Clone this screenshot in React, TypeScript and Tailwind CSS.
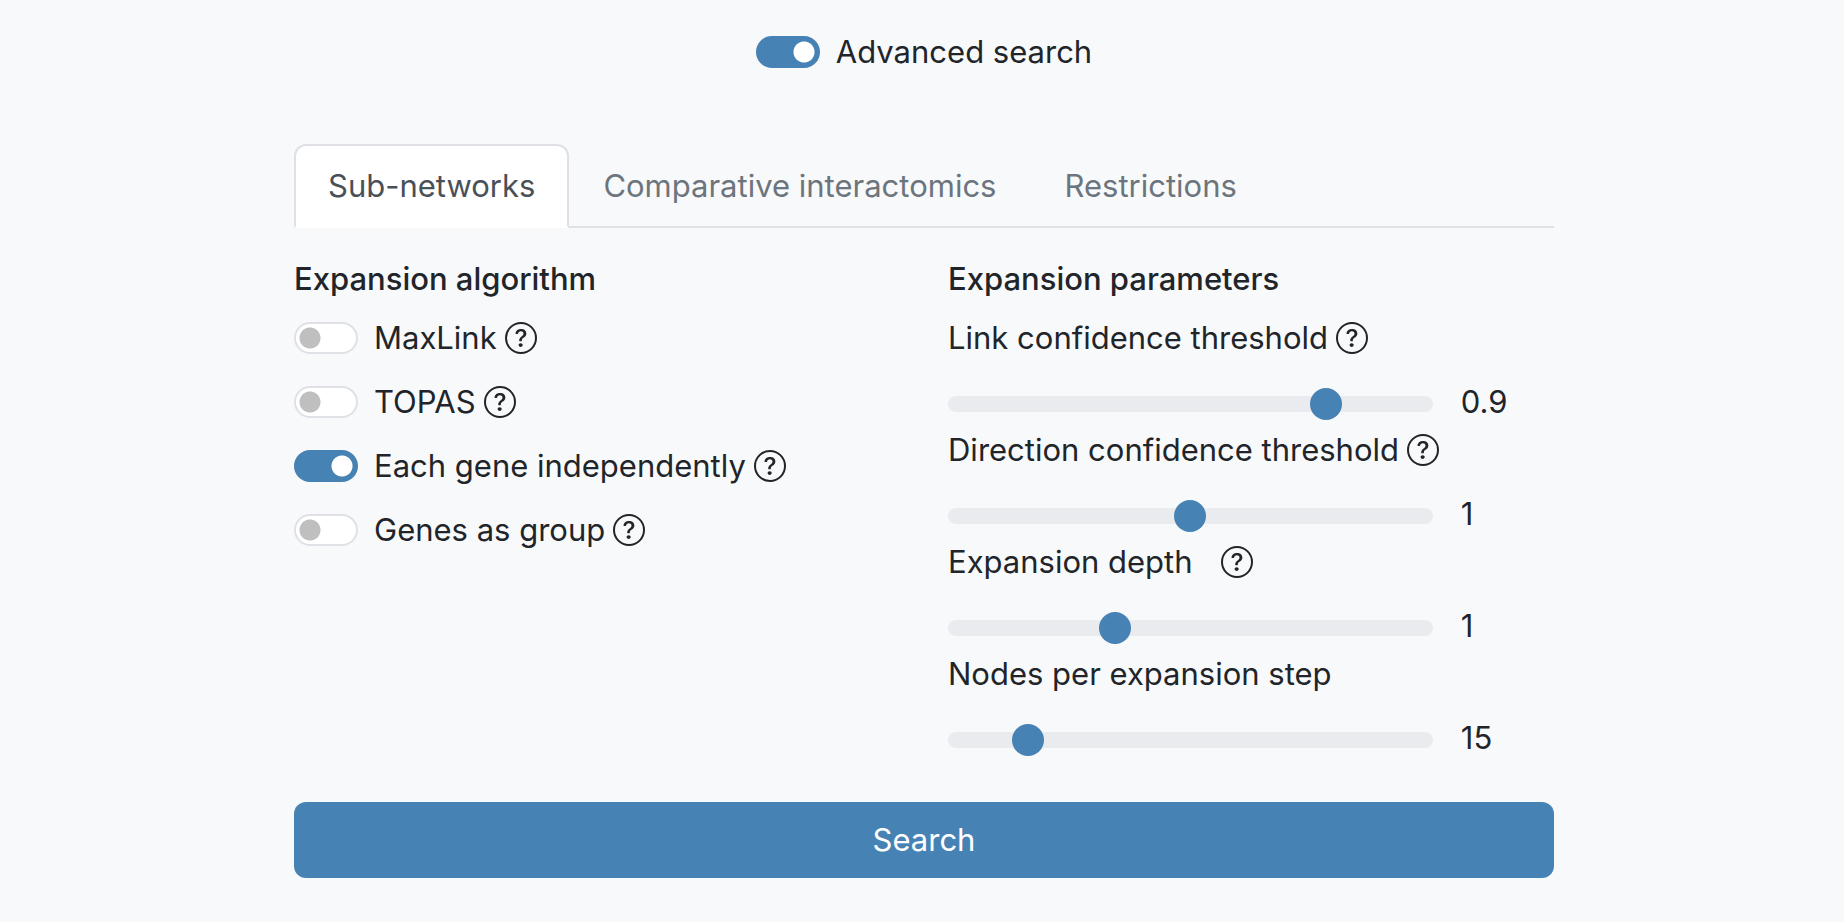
import { useState } from 'react'
import { BsQuestionCircle } from 'react-icons/bs'

const tabs = ['Sub-networks', 'Comparative interactomics', 'Restrictions']

const algorithms = [
  { id: 'maxlink', label: 'MaxLink' },
  { id: 'topas', label: 'TOPAS' },
  { id: 'independent', label: 'Each gene independently' },
  { id: 'group', label: 'Genes as group' },
]

const parameters = [
  { id: 'link', label: 'Link confidence threshold', min: 0.5, max: 1, step: 0.01, initial: 0.9, help: 'ml-2' },
  { id: 'direction', label: 'Direction confidence threshold', min: 0, max: 2, step: 0.01, initial: 1, help: 'ml-2' },
  { id: 'depth', label: 'Expansion depth', min: 0, max: 3, step: 1, initial: 1, help: 'ml-7' },
  { id: 'nodes', label: 'Nodes per expansion step', min: 1, max: 100, step: 1, initial: 15, help: '' },
]

type SwitchProps = {
  id: string
  checked: boolean
  onChange: (checked: boolean) => void
}

function Switch({ id, checked, onChange }: SwitchProps) {
  return (
    <input
      id={id}
      type="checkbox"
      role="switch"
      checked={checked}
      onChange={(e) => onChange(e.target.checked)}
      className="h-8 w-16 shrink-0 cursor-pointer appearance-none rounded-full border-2 border-[#dfe1e6] bg-white bg-[radial-gradient(circle_at_14px_center,#bfbfbf_10px,transparent_11px)] bg-no-repeat checked:border-[#4682b4] checked:bg-[#4682b4] checked:bg-[radial-gradient(circle_at_46px_center,#ffffff_10px,transparent_11px)]"
    />
  )
}

function Help({ topic, className }: { topic: string; className: string }) {
  return (
    <button type="button" aria-label={`Help: ${topic}`} className={`shrink-0 cursor-pointer ${className}`}>
      <BsQuestionCircle className="size-8" />
    </button>
  )
}

export default function App() {
  const [advanced, setAdvanced] = useState(true)
  const [tab, setTab] = useState(tabs[0])
  const [algorithm, setAlgorithm] = useState('independent')
  const [values, setValues] = useState<Record<string, number>>(
    Object.fromEntries(parameters.map((p) => [p.id, p.initial]))
  )

  return (
    <div className="min-h-screen bg-[#f8f9fb] pt-7 pb-11 pl-1 font-['Inter',sans-serif] text-[31px] leading-[48px] text-[#212529]">
      <main className="mx-auto max-w-[1260px]">
        <div className="flex items-center justify-center gap-4">
          <Switch id="advanced" checked={advanced} onChange={setAdvanced} />
          <label htmlFor="advanced">Advanced search</label>
        </div>

        {/* Tabs */}
        <div role="tablist" className="mt-[68px] flex border-b-2 border-[#dfe1e6]">
          {tabs.map((name) => (
            <button
              key={name}
              type="button"
              role="tab"
              aria-selected={tab === name}
              onClick={() => setTab(name)}
              className={`-mb-0.5 cursor-pointer rounded-t-xl border-2 px-8 py-4 ${
                tab === name
                  ? 'border-[#dfe1e6] border-b-white bg-white text-[#495057]'
                  : 'border-transparent text-[#6c757d]'
              }`}
            >
              {name}
            </button>
          ))}
        </div>

        <div className="mt-8 grid grid-cols-2 gap-12">
          <section>
            <h2 className="mb-4 leading-[38px] font-medium">Expansion algorithm</h2>
            <div className="flex flex-col gap-4">
              {algorithms.map((a) => (
                <div key={a.id} className="flex items-center">
                  <Switch id={a.id} checked={algorithm === a.id} onChange={() => setAlgorithm(a.id)} />
                  <label htmlFor={a.id} className="ml-4">
                    {a.label}
                  </label>
                  <Help topic={a.label} className="ml-2" />
                </div>
              ))}
            </div>
          </section>

          <section>
            <h2 className="mb-4 leading-[38px] font-medium">Expansion parameters</h2>
            {parameters.map((p) => (
              <div key={p.id}>
                <div className="flex items-center">
                  <label htmlFor={p.id}>{p.label}</label>
                  {p.help && <Help topic={p.label} className={p.help} />}
                </div>
                <div className="flex items-center pt-4">
                  <input
                    id={p.id}
                    type="range"
                    min={p.min}
                    max={p.max}
                    step={p.step}
                    value={values[p.id]}
                    onChange={(e) => setValues({ ...values, [p.id]: Number(e.target.value) })}
                    className="h-12 w-4/5 cursor-pointer appearance-none bg-transparent pt-1 [&::-webkit-slider-runnable-track]:h-4 [&::-webkit-slider-runnable-track]:rounded-full [&::-webkit-slider-runnable-track]:bg-[#eaebef] [&::-webkit-slider-thumb]:-mt-2 [&::-webkit-slider-thumb]:size-8 [&::-webkit-slider-thumb]:appearance-none [&::-webkit-slider-thumb]:rounded-full [&::-webkit-slider-thumb]:bg-[#4682b4]"
                  />
                  <output htmlFor={p.id} className="ml-7">
                    {values[p.id]}
                  </output>
                </div>
              </div>
            ))}
          </section>
        </div>

        <button type="button" className="mt-10 w-full cursor-pointer rounded-xl bg-[#4682b4] py-3.5 text-white">
          Search
        </button>
      </main>
    </div>
  )
}
